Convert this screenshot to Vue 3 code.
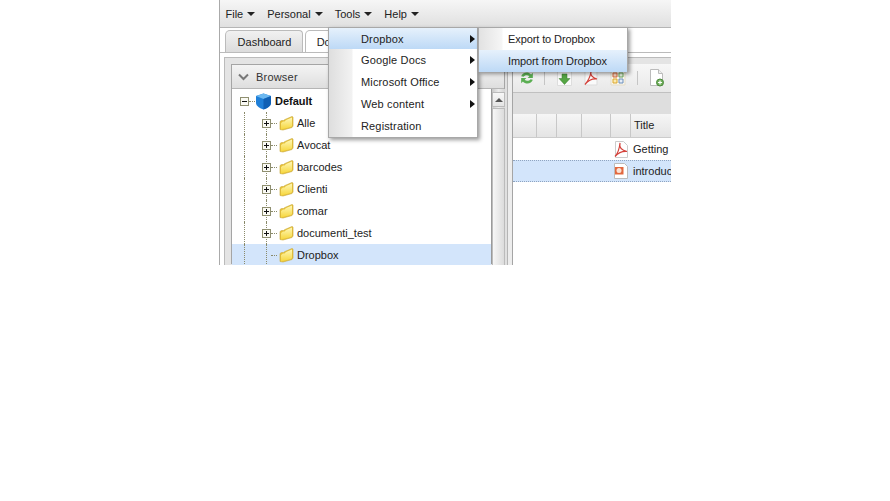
<script setup>
const menus = ['File', 'Personal', 'Tools', 'Help']
const folders = [
  { name: 'Alle', plus: true }, { name: 'Avocat', plus: true }, { name: 'barcodes', plus: true },
  { name: 'Clienti', plus: true }, { name: 'comar', plus: true }, { name: 'documenti_test', plus: true },
  { name: 'Dropbox', plus: false, selected: true }
]
const mainItems = [
  { name: 'Dropbox', arrow: true, active: true }, { name: 'Google Docs', arrow: true },
  { name: 'Microsoft Office', arrow: true }, { name: 'Web content', arrow: true }, { name: 'Registration' }
]
const columns = [24, 20, 25, 29, 20, 60]
</script>

<template>
  <div class="page">
    <div class="app">
      <div class="menubar">
        <span v-for="m in menus" :key="m" class="menu">{{ m }}<i class="caret"></i></span>
      </div>
      <div class="tabs">
        <div class="tab">Dashboard</div>
        <div class="tab current">Documents</div>
      </div>
      <div class="body">
        <div class="frame">
          <div class="browser">
            <div class="browser-head">
              <svg width="11" height="8" viewBox="0 0 11 8"><path d="M1 1.500 5.500 6 10 1.500" fill="none" stroke="#777" stroke-width="2"/></svg>
              <span>Browser</span>
            </div>
            <div class="tree">
              <div class="tree-row root">
                <span class="box minus"></span><span class="dots"></span>
                <svg class="cube" width="17" height="17" viewBox="0 0 17 17">
                  <path d="M8.500.500 16 3v7c0 3-4 5.500-7.500 6.500C5 15.500 1 13 1 10V3z" fill="#1f7fd8"/>
                  <path d="M8.500.500 16 3 8.500 6 1 3z" fill="#6cb8f0"/>
                  <path d="M8.500 6 16 3v7c0 3-4 5.500-7.500 6.500z" fill="#0f5fb4"/>
                </svg>
                <b>Default</b>
              </div>
              <div v-for="f in folders" :key="f.name" class="tree-row child" :class="{ selected: f.selected }">
                <span class="vline outer"></span>
                <span class="vline inner"></span>
                <span v-if="f.plus" class="box plus"></span>
                <span v-else class="nobox"></span>
                <span class="dots"></span>
                <svg class="folder" width="16" height="16" viewBox="0 0 16 16">
                  <defs>
                    <linearGradient id="fold" x1="0" y1="0" x2="0" y2="1">
                      <stop offset="0" stop-color="#fff8b8"/>
                      <stop offset="1" stop-color="#f6d63c"/>
                    </linearGradient>
                  </defs>
                  <path d="M2 14.500V6.500l1.500-1h2L7 4.500 14 1.500 15 2v9l-1 1.500-9 2.500z" fill="#e8c030" stroke="#cdb04a" stroke-width=".7"/>
                  <path d="M3 14.500V8l2-1.500h1.500L8 5l6-2.500V11l-1 1z" fill="url(#fold)"/>
                </svg>
                <span>{{ f.name }}</span>
              </div>
            </div>
            <div class="scrollbar">
              <div class="scroll-btn"><i></i></div>
              <div class="scroll-thumb"></div>
            </div>
          </div>
          <div class="splitter"></div>
          <div class="docs">
            <div class="toolbar">
              <svg width="14" height="14" viewBox="1 1 12 12"><path d="M2 5.500C3 2 8 1 10.500 4L12 2.500V7H7.500L9 5.500C7.500 4 5 4.500 4 6zM12 8.500C11 12 6 13 3.500 10L2 11.500V7h4.500L5 8.500C6.500 10 9 9.500 10 8z" fill="#5aae52"/></svg>
              <span class="sep first"></span>
              <svg class="ic-save" width="15" height="16" viewBox="0 0 15 16"><path d="M.5 1.500h14v14H.5z" fill="#fafafa" stroke="#ddd"/><path d="M5 4h5v4.500h3l-5.500 6L2 8.500h3z" fill="#55a544" stroke="#3b7f30" stroke-width=".5"/></svg>
              <svg class="ic-pdf" width="16" height="16" viewBox="0 0 16 16"><path d="M2 1h12v14H2z" fill="#fafafa" stroke="#ddd"/><path d="M8 1.500c-1 3 1 6 6 7.500-4-.5-8 .5-12 5.500C5 11 7.500 6 8 1.500z" fill="none" stroke="#d4413a" stroke-width="1.200"/></svg>
              <svg class="ic-grid" width="16" height="16" viewBox="0 0 16 16"><path d="M1 1h14v14H1z" fill="#fbf8ee" stroke="#e5ddc8"/><path d="M3 3h4v4H3z" fill="#f8d5c0" stroke="#d56a3c"/><path d="M9 3h4v4H9z" fill="#e5f0e0" stroke="#6aa55c"/><path d="M3 9h4v4H3z" fill="#fbeab0" stroke="#dca72c"/><path d="M9 9h4v4H9z" fill="#e5edf7" stroke="#6a8dbb"/></svg>
              <span class="sep second"></span>
              <svg width="17" height="18" viewBox="0 0 17 18"><path d="M2.500.500h8l4 4v12h-12z" fill="#fff" stroke="#bbb"/><path d="M10.500.500v4h4" fill="#eee" stroke="#bbb"/><circle cx="12" cy="13.500" r="3.500" fill="#6fae5b" stroke="#4c8a3c"/><path d="M10 13.500h4M12 11.500v4" stroke="#fff" stroke-width="1.200"/></svg>
            </div>
            <div class="band"></div>
            <div class="grid-head">
              <span v-for="(w, i) in columns" :key="i" class="col" :style="{ width: w + 'px' }">{{ i === 5 ? 'Title' : '' }}</span>
            </div>
            <div class="doc-row">
              <svg class="doc-ic" width="16" height="17" viewBox="0 0 16 17"><path d="M2.500.500h8l4 4v12h-12z" fill="#fff" stroke="#ccc"/><path d="M7 2c-1 4 1 7 7 8.500-5-.5-8 .5-12 5C5 12 6.500 7 7 2z" fill="none" stroke="#d4413a" stroke-width="1.200"/></svg>
              <span>Getting Started</span>
            </div>
            <div class="doc-row picked">
              <svg class="doc-ic" width="16" height="16" viewBox="0 0 16 16"><path d="M1.500.500h10l3 3v12h-13z" fill="#fff" stroke="#bbb"/><path d="M2 4h8.500v7.500H2z" fill="#e2683f"/><circle cx="6" cy="7.500" r="2.500" fill="#fbe3d5"/></svg>
              <span>introduction.ppt</span>
            </div>
          </div>
        </div>
      </div>

      <div class="popup main-menu">
        <div v-for="it in mainItems" :key="it.name" class="item" :class="{ active: it.active }">
          <span>{{ it.name }}</span><i v-if="it.arrow" class="arrow"></i>
        </div>
      </div>
      <div class="popup sub-menu">
        <div class="item">Export to Dropbox</div>
        <div class="item active">Import from Dropbox</div>
      </div>
    </div>
  </div>
</template>

<style>
html, body { margin: 0; background: #fff; }
</style>
<style scoped>
.page { width: 890px; height: 501px; overflow: hidden; background: #fff; font: 11px "Liberation Sans", Arial, sans-serif; color: #222; }
.app { position: relative; width: 452px; height: 265px; margin-left: 219px; overflow: hidden; background: #fff; border-left: 1px solid #aaa; box-sizing: border-box; }
.menubar { height: 28px; box-sizing: border-box; display: flex; align-items: center; padding-left: 5.5px; gap: 12px; background: linear-gradient(#f6f6f6, #e0e0e0); border-bottom: 1px solid #b5b5b5; }
.menu { display: inline-flex; align-items: center; gap: 4px; font-size: 11px; }
.caret { width: 0; height: 0; border: 4px solid transparent; border-top: 4px solid #222; border-bottom: 0; }
.tabs { height: 24px; display: flex; align-items: flex-end; gap: 2px; padding-left: 5px; }
.tab { width: 78px; height: 22px; box-sizing: border-box; border: 1px solid #bbb; border-bottom: 0; border-radius: 5px 4px 0 0; background: linear-gradient(#f1f1f1, #dcdcdc); display: flex; align-items: center; justify-content: center; padding-left: 1px; }
.tab.current { background: #fff; }
.body { height: 213px; box-sizing: border-box; border-top: 1px solid #bbb; padding: 4px 0 0 4px; }
.frame { height: 220px; box-sizing: border-box; border: 1px solid #bbb; border-right: 0; padding: 6px 0 0 6px; display: flex; background: #e4e4e4; }
.browser { position: relative; width: 274px; height: 200px; flex: none; border: 1px solid #a5a5a5; box-sizing: border-box; border-bottom: 0; background: #fff; }
.browser-head { height: 24px; display: flex; align-items: center; gap: 7px; padding-left: 6px; box-sizing: border-box; background: linear-gradient(#f4f4f4, #dedede); border-bottom: 1px solid #b5b5b5; color: #333; letter-spacing: .2px; }
.tree { width: 259px; padding-top: 1px; }
.tree-row { height: 22px; display: flex; align-items: center; position: relative; }
.root { padding-left: 8px; }
.root b { margin-left: 2px; color: #111; }
.child { padding-left: 30px; }
.child > span:last-child { margin-left: 2px; }
.selected { background: #d3e5fb; }
.vline { position: absolute; top: 0; bottom: 0; border-left: 1px dotted #8a8a6a; }
.vline.outer { left: 12px; }
.vline.inner { left: 34px; }
.box { position: relative; width: 9px; height: 9px; box-sizing: border-box; border: 1px solid #8f8f70; flex: none; }
.minus { background: linear-gradient(#111, #111) center / 5px 1px no-repeat #fafaf4; }
.plus { background: linear-gradient(#111, #111) center / 5px 1px no-repeat, linear-gradient(#111, #111) center / 1px 5px no-repeat, #fafaf4; }
.nobox { width: 9px; flex: none; }
.dots { width: 6px; margin-right: 1px; border-top: 1px dotted #8a8a6a; flex: none; }
.cube { margin: 0 1px 0 -1px; }
.folder { margin-right: 1px; flex: none; }
.scrollbar { position: absolute; left: 259px; top: 24px; bottom: 0; width: 14px; background: linear-gradient(90deg, #c8c8c8, #ececec 50%, #d5d5d5); border-left: 1px solid #9a9a9a; box-sizing: border-box; }
.scroll-btn { height: 15px; margin-top: 3px; background: linear-gradient(#f8f8f8, #e4e4e4); border: 1px solid #bbb; box-sizing: border-box; display: flex; align-items: center; justify-content: center; }
.scroll-btn i { width: 0; height: 0; border: 4px solid transparent; border-bottom: 4px solid #555; border-top: 0; }
.scroll-thumb { height: 160px; margin-top: 1px; border: 1px solid #bbb; background: linear-gradient(90deg, #f6f6f6, #dcdcdc); box-sizing: border-box; }
.splitter { width: 8px; flex: none; background: linear-gradient(90deg, #e0e0e0 0 2px, #b5b5b5 2px 3px, #ededed 3px 7px, #a5a5a5 7px); }
.docs { flex: 1; min-width: 0; overflow: hidden; background: #fff; }
.toolbar { height: 29px; display: flex; align-items: center; padding-left: 7px; background: linear-gradient(#f7f7f7, #e8e8e8); border-bottom: 1px solid #c0c0c0; box-sizing: border-box; }
.sep { width: 1px; height: 14px; background: #c5c5c5; flex: none; }
.sep.first { margin: 0 12px 0 10px; }
.ic-pdf, .ic-grid { margin-left: 11px; }
.sep.second { margin: 0 10px 0 11px; }
.band { height: 21px; background: #dedede; }
.grid-head { height: 24px; display: flex; background: linear-gradient(#f6f6f6, #e4e4e4); border-bottom: 1px solid #ccc; box-sizing: border-box; }
.col { flex: none; box-sizing: border-box; border-right: 1px solid #c8c8c8; padding-left: 3px; line-height: 23px; }
.col:last-child { border-right: 0; }
.doc-row { height: 22px; display: flex; align-items: center; padding-left: 100px; white-space: nowrap; box-sizing: border-box; }
.doc-ic { margin-right: 4px; flex: none; }
.picked { background: #d3e5fb; border-top: 1px dotted #8fa4c0; border-bottom: 1px dotted #8fa4c0; }
.popup { position: absolute; top: 27px; box-sizing: border-box; background: #fff; border: 1px solid #a8a8a8; box-shadow: 2px 2px 4px rgba(0,0,0,.4); }
.main-menu { left: 108px; width: 150px; height: 111px; background: linear-gradient(90deg, #dedede, #f2f2f2 23px, #fff 24px); }
.sub-menu { left: 258px; width: 150px; height: 45px; background: linear-gradient(90deg, #e2e2e2, #f6f6f6 23px, #fff 24px); }
.item { height: 22px; display: flex; align-items: center; justify-content: space-between; padding: 0 2px 0 32px; box-sizing: border-box; }
.main-menu .item:first-child { height: 21px; }
.main-menu .item { letter-spacing: .15px; }
.active { background: linear-gradient(#e6f1fc, #bdd9f6); }
.sub-menu .item { padding-left: 29px; letter-spacing: -.1px; }
.arrow { width: 0; height: 0; border: 4px solid transparent; border-left: 5px solid #111; border-right: 0; }
</style>
